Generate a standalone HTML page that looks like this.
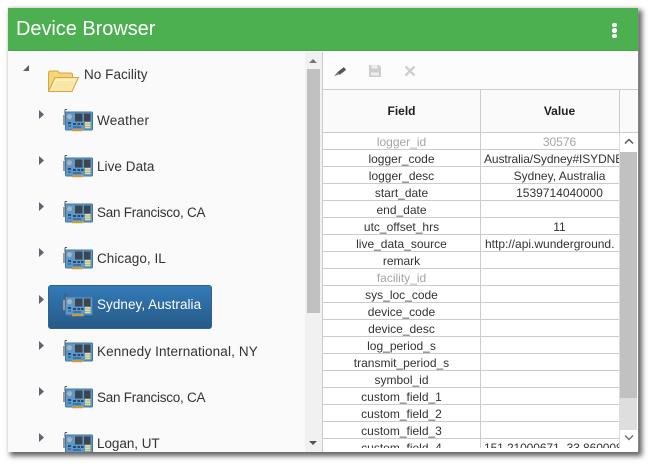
<!DOCTYPE html>
<html><head><meta charset="utf-8"><style>
html,body{margin:0;padding:0;background:#fff;width:654px;height:468px;overflow:hidden}
*{box-sizing:border-box}
body{font-family:"Liberation Sans",sans-serif;color:#333}
div,svg{position:absolute}
#win{left:8px;top:8px;width:630px;height:444px;background:#fafafa;box-shadow:0 -1px 1px #ddd,3px 3px 5px 1px rgba(0,0,0,.62)}
#head{left:8px;top:8px;width:630px;height:43px;background:#4caf50;color:#fff;font-size:20px;line-height:43px;padding-left:8px;letter-spacing:-.05px;border-bottom:1px solid #48a64c}
.dot{width:4.5px;height:4.5px;border-radius:50%;background:#fff;left:612px}
.t{font-size:13.5px;line-height:18px;white-space:nowrap;color:#333;letter-spacing:.05px}
.f,.v{height:17px;line-height:17px;font-size:12px;text-align:center;white-space:nowrap;overflow:hidden;color:#333}
.f{left:323px;width:157px}
.v{left:481px;width:157px}
.lft{text-align:left;padding-left:3px;letter-spacing:-.1px}
.l{left:322px;width:298px;height:1px;background:#ccc}
</style></head><body>
<svg width="0" height="0" style="left:0;top:0"><defs>
<symbol id="card" viewBox="0 0 32 24">
<path d="M1 6h3v10H1z" fill="#9b9b9b"/><path d="M3 0.500v5M3 0.500h2" stroke="#555" fill="none"/>
<rect x="3.500" y="3" width="27" height="18" rx="1" fill="#5f98c8" stroke="#3f76a4"/>
<circle cx="7.500" cy="7.700" r="2.500" fill="#aab4bc"/>
<rect x="13" y="4.500" width="7.500" height="8" fill="#3d4650"/><rect x="22" y="4.500" width="6.500" height="8" fill="#3d4650"/>
<rect x="6" y="13" width="3" height="2" fill="#1f4f78"/><rect x="11" y="14" width="3" height="2" fill="#1f4f78"/><rect x="15.500" y="14" width="2.500" height="2" fill="#1f4f78"/><rect x="19" y="14" width="2.500" height="2" fill="#1f4f78"/>
<rect x="23" y="13" width="5.500" height="1.700" fill="#f1dd8f"/><rect x="23" y="15.300" width="5.500" height="1.700" fill="#f1dd8f"/><rect x="23" y="17.500" width="5.500" height="1.700" fill="#f1dd8f"/>
<path d="M6 17h3M11 18h8" stroke="#1f4f78"/>
<path d="M10 20.200h11.500v2H10z" fill="#e3a93a"/><path d="M11 20.200v2M13 20.200v2M15 20.200v2M17 20.200v2M19 20.200v2" stroke="#a9782a" stroke-width=".6"/>
</symbol>
<symbol id="arr" viewBox="0 0 6 10"><path d="M0 0l5 4.500L0 9z" fill="#5d6670"/></symbol>
</defs></svg>

<div id="win"></div>
<div id="head">Device Browser</div>
<div class="dot" style="top:22.500px"></div><div class="dot" style="top:28px"></div><div class="dot" style="top:33.500px"></div>

<!-- left tree -->
<svg style="left:22px;top:64px" width="9" height="8"><path d="M7 1v6H1z" fill="#5d6066"/></svg>
<svg style="left:47px;top:68px" width="33" height="25" viewBox="0 0 33 25">
<path d="M1.500 23V5q0-2 2-2h7l2 2h11q2 0 2 2v3" fill="#f3d67a" stroke="#d9a441"/>
<path d="M1.500 23.500L8 9.500h23.500L25 23.500z" fill="#f9e7a5" stroke="#d9a441"/>
<path d="M4 22l5-10h19" fill="none" stroke="#fff6d6"/>
</svg>
<div class="t" style="left:84px;top:66px">No Facility</div>

<svg style="left:39px;top:110px" width="6" height="10"><use href="#arr"/></svg>
<svg style="left:39px;top:156px" width="6" height="10"><use href="#arr"/></svg>
<svg style="left:39px;top:202px" width="6" height="10"><use href="#arr"/></svg>
<svg style="left:39px;top:248px" width="6" height="10"><use href="#arr"/></svg>
<svg style="left:39px;top:295px" width="6" height="10"><use href="#arr"/></svg>
<svg style="left:39px;top:341px" width="6" height="10"><use href="#arr"/></svg>
<svg style="left:39px;top:387px" width="6" height="10"><use href="#arr"/></svg>
<svg style="left:39px;top:433px" width="6" height="10"><use href="#arr"/></svg>

<div style="left:48px;top:285px;width:164px;height:44px;border-radius:3px;background:linear-gradient(#337ab7,#265a88);border:1px solid #2b6496"></div>

<svg style="left:62px;top:109px" width="32" height="24"><use href="#card"/></svg>
<svg style="left:62px;top:155px" width="32" height="24"><use href="#card"/></svg>
<svg style="left:62px;top:201px" width="32" height="24"><use href="#card"/></svg>
<svg style="left:62px;top:247px" width="32" height="24"><use href="#card"/></svg>
<svg style="left:62px;top:294px" width="32" height="24"><use href="#card"/></svg>
<svg style="left:62px;top:340px" width="32" height="24"><use href="#card"/></svg>
<svg style="left:62px;top:386px" width="32" height="24"><use href="#card"/></svg>
<svg style="left:62px;top:432px" width="32" height="20" viewBox="0 0 32 20"><use href="#card" width="32" height="24"/></svg>

<div class="t" style="left:97px;top:112px;letter-spacing:.2px">Weather</div>
<div class="t" style="left:97px;top:158px">Live Data</div>
<div class="t" style="left:97px;top:204px;letter-spacing:-.25px">San Francisco, CA</div>
<div class="t" style="left:97px;top:250px">Chicago, IL</div>
<div class="t" style="left:97px;top:296px;color:#fff">Sydney, Australia</div>
<div class="t" style="left:97px;top:343px;letter-spacing:.13px">Kennedy International, NY</div>
<div class="t" style="left:97px;top:389px;letter-spacing:-.25px">San Francisco, CA</div>
<div class="t" style="left:97px;top:435px;letter-spacing:-.05px">Logan, UT</div>

<!-- left scrollbar -->
<div style="left:305px;top:52px;width:17px;height:400px;background:#f1f1f1"></div>
<div style="left:307px;top:69px;width:13px;height:244px;background:#c1c1c1"></div>
<svg style="left:309px;top:58px" width="9" height="6"><path d="M4 1L8 5H0z" fill="#777"/></svg>
<svg style="left:309px;top:440px" width="9" height="6"><path d="M0 1h8L4 5z" fill="#555"/></svg>

<!-- right panel -->
<div style="left:322px;top:52px;width:316px;height:400px;background:#fff;border-left:1px solid #ccc"></div>
<div style="left:323px;top:52px;width:315px;height:37px;background:#fcfcfc"></div>
<div style="left:323px;top:89px;width:315px;height:43px;background:#fafafa"></div>
<svg style="left:333px;top:64px" width="15" height="14" viewBox="0 0 15 14"><path d="M5.500 9.500L12 4.500" stroke="#555" stroke-width="3.600" fill="none"/><path d="M4.500 8L1.300 12l4.700-1.500z" fill="#6c7480"/></svg>
<svg style="left:369px;top:65px" width="12" height="12" viewBox="0 0 12 12"><path d="M0 0h10l2 2v10H0z" fill="#cdcdcd"/><rect x="2.500" y="0" width="6" height="3.500" fill="#eee"/><rect x="2" y="7.500" width="8" height="3" fill="#eee"/></svg>
<svg style="left:404px;top:65px" width="12" height="12" viewBox="0 0 12 12"><path d="M1.500 1.500l9 9M10.500 1.500l-9 9" stroke="#cfcfcf" stroke-width="2.400"/></svg>

<div class="l" style="top:89px;width:316px"></div>
<div class="l" style="top:132px;width:316px"></div>
<div class="l" style="top:149px"></div><div class="l" style="top:166px"></div><div class="l" style="top:183px"></div><div class="l" style="top:200px"></div><div class="l" style="top:217px"></div><div class="l" style="top:234px"></div><div class="l" style="top:251px"></div><div class="l" style="top:268px"></div><div class="l" style="top:285px"></div><div class="l" style="top:302px"></div><div class="l" style="top:319px"></div><div class="l" style="top:336px"></div><div class="l" style="top:353px"></div><div class="l" style="top:370px"></div><div class="l" style="top:387px"></div><div class="l" style="top:404px"></div><div class="l" style="top:421px"></div><div class="l" style="top:438px"></div>
<div style="left:480px;top:89px;width:1px;height:359px;background:#ccc"></div>
<div style="left:619px;top:89px;width:1px;height:43px;background:#ccc"></div>

<div class="f" style="top:103px;font-weight:bold;color:#222">Field</div>
<div class="v" style="top:103px;font-weight:bold;color:#222">Value</div>

<div class="f" style="top:134px;color:#a5a5a5">logger_id</div><div class="v" style="top:134px;color:#a5a5a5">30576</div>
<div class="f" style="top:151px">logger_code</div><div class="v lft" style="top:151px">Australia/Sydney#ISYDNE</div>
<div class="f" style="top:168px">logger_desc</div><div class="v" style="top:168px">Sydney, Australia</div>
<div class="f" style="top:185px">start_date</div><div class="v" style="top:185px">1539714040000</div>
<div class="f" style="top:202px">end_date</div>
<div class="f" style="top:219px">utc_offset_hrs</div><div class="v" style="top:219px">11</div>
<div class="f" style="top:236px">live_data_source</div><div class="v lft" style="top:236px;letter-spacing:0;padding-left:4px">http://api.wunderground.</div>
<div class="f" style="top:253px">remark</div>
<div class="f" style="top:270px;color:#a5a5a5">facility_id</div>
<div class="f" style="top:287px">sys_loc_code</div>
<div class="f" style="top:304px">device_code</div>
<div class="f" style="top:321px">device_desc</div>
<div class="f" style="top:338px">log_period_s</div>
<div class="f" style="top:355px">transmit_period_s</div>
<div class="f" style="top:372px">symbol_id</div>
<div class="f" style="top:389px">custom_field_1</div>
<div class="f" style="top:406px">custom_field_2</div>
<div class="f" style="top:423px">custom_field_3</div>
<div class="f" style="top:440px;height:8px">custom_field_4</div><div class="v lft" style="top:440px;height:8px">151.21000671,-33.860008</div>

<!-- right scrollbar -->
<div style="left:619px;top:133px;width:1px;height:315px;background:#ddd"></div>
<div style="left:620px;top:133px;width:18px;height:315px;background:#fff"></div>
<div style="left:620px;top:152px;width:17px;height:246px;background:#c1c1c1"></div>
<div style="left:620px;top:398px;width:17px;height:32px;background:#dedede"></div>
<svg style="left:624px;top:138px" width="10" height="7"><path d="M1 5.500L5 1.500l4 4" fill="none" stroke="#555" stroke-width="1.500"/></svg>
<svg style="left:624px;top:434px" width="10" height="7"><path d="M1 1.500l4 4 4-4" fill="none" stroke="#6b7580" stroke-width="1.500"/></svg>
</body></html>
